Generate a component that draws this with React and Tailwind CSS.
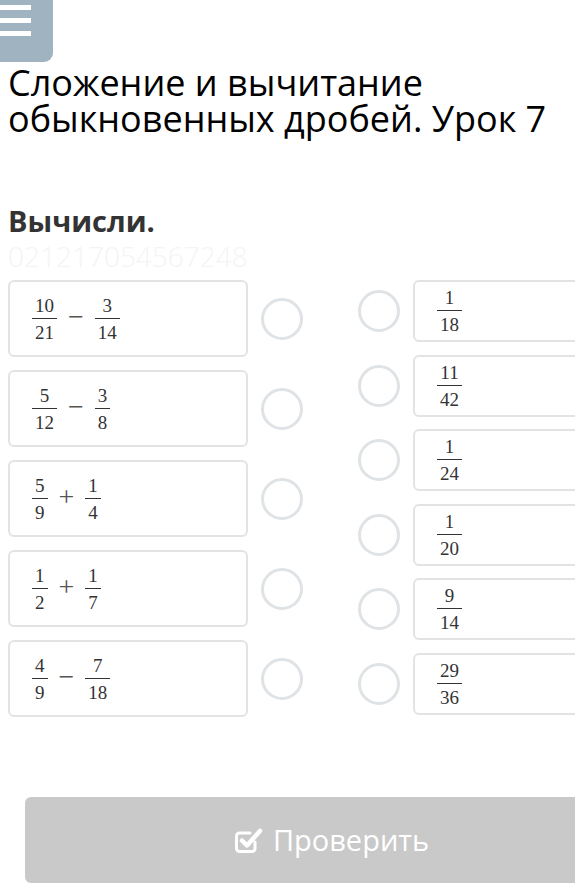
import React from 'react';

const tasks = [
  { a: ['10', '21'], op: '−', b: ['3', '14'] },
  { a: ['5', '12'], op: '−', b: ['3', '8'] },
  { a: ['5', '9'], op: '+', b: ['1', '4'] },
  { a: ['1', '2'], op: '+', b: ['1', '7'] },
  { a: ['4', '9'], op: '−', b: ['7', '18'] },
];

const answers = [
  ['1', '18'],
  ['11', '42'],
  ['1', '24'],
  ['1', '20'],
  ['9', '14'],
  ['29', '36'],
];

function Frac({ n, d }) {
  return (
    <span className="inline-flex flex-col items-center text-[19px] leading-none text-[#333]" style={{ fontFamily: '"Liberation Serif", serif' }}>
      <span className="px-[3px] pb-[3px]">{n}</span>
      <span className="h-px w-full bg-[#333]" />
      <span className="px-[3px] pt-[4px]">{d}</span>
    </span>
  );
}

function Circle() {
  return <div className="w-[42px] h-[42px] shrink-0 rounded-full border-[3px] border-[#dfe3e6]" />;
}

function CheckIcon() {
  return (
    <svg width="30" height="30" viewBox="0 0 30 30" fill="none">
      <path d="M22 17v6.5a3 3 0 0 1-3 3H6.5a3 3 0 0 1-3-3V11a3 3 0 0 1 3-3H17" stroke="white" strokeWidth="3" strokeLinecap="round" />
      <path d="M9 15.5l5 5L27 6" stroke="white" strokeWidth="4.5" strokeLinecap="round" strokeLinejoin="round" />
    </svg>
  );
}

export default function App() {
  return (
    <div className="w-[575px] min-h-[896px] overflow-hidden bg-white" style={{ fontFamily: '"Open Sans", sans-serif' }}>
      <div className="w-[662px]">
        <div className="w-[53px] h-[62px] bg-[#a0b3c1] rounded-br-[9px] flex flex-col gap-[8px] pt-[5px]">
          <span className="w-[31px] h-[5px] bg-white" />
          <span className="w-[31px] h-[5px] bg-white" />
          <span className="w-[31px] h-[5px] bg-white" />
        </div>

        <h1 className="mt-[3px] pl-[8px] text-[36px] leading-[36px] text-black font-normal w-[570px]">
          Сложение и вычитание обыкновенных дробей. Урок 7
        </h1>

        <h2 className="mt-[66px] pl-[8px] text-[29px] leading-[36px] font-bold text-[#333]">Вычисли.</h2>
        <div className="pl-[8px] text-[28px] leading-[34px] font-light text-[#f4f4f4]">021217054567248</div>

        <div className="mt-[7px] flex px-[8px]">
          <div className="flex items-start">
            <div className="flex flex-col gap-[13px]">
              {tasks.map((t, i) => (
                <div key={i} className="flex items-center gap-[13px]">
                  <div className="w-[240px] h-[77px] rounded-[6px] border-2 border-[#e3e3e3] flex items-center pl-[22px] gap-[11px]">
                    <Frac n={t.a[0]} d={t.a[1]} />
                    <span className="text-[28px] leading-none text-[#555] -mt-[3px]" style={{ fontFamily: '"Liberation Serif", serif' }}>{t.op}</span>
                    <Frac n={t.b[0]} d={t.b[1]} />
                  </div>
                  <Circle />
                </div>
              ))}
            </div>
          </div>
          <div className="ml-[55px] flex flex-col gap-[12.6px]">
            {answers.map((a, i) => (
              <div key={i} className="flex items-center gap-[13px]">
                <Circle />
                <div className="w-[241px] h-[62px] rounded-[6px] border-2 border-[#e3e3e3] flex items-center pl-[22px]">
                  <Frac n={a[0]} d={a[1]} />
                </div>
              </div>
            ))}
          </div>
        </div>

        <div className="mt-[80px] mx-[25px] h-[86px] rounded-[6px] bg-[#c9c9c9] flex items-center justify-center gap-[10px] text-white text-[29px]">
          <CheckIcon />
          <span>Проверить</span>
        </div>
      </div>
    </div>
  );
}
